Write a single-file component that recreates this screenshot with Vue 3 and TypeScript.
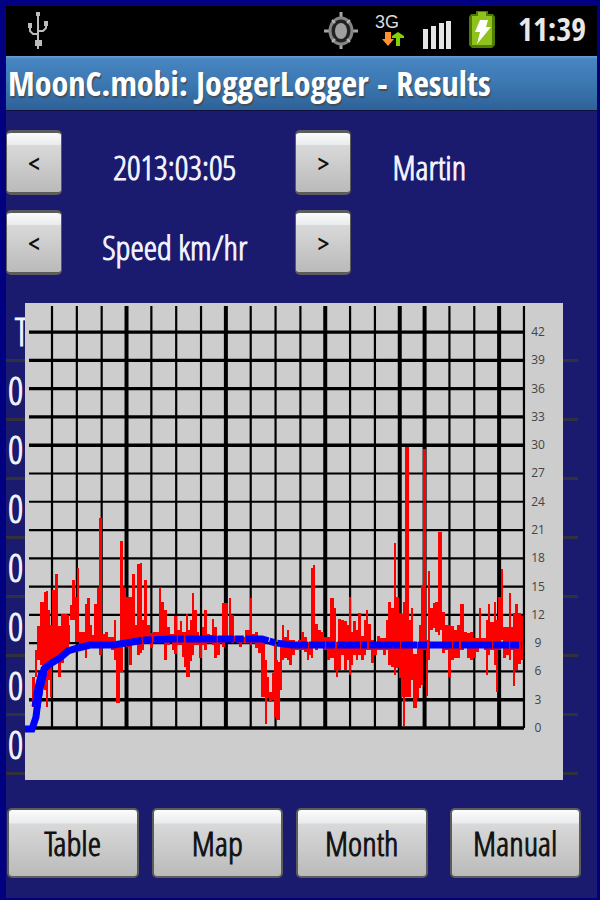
<script setup lang="ts">
import { ref } from 'vue'

type Sample = [x: number, top: number, bottom: number]

const dates = ref<string[]>(['2013:03:05'])
const metrics = ref<string[]>(['Speed km/hr'])
const dateIndex = ref(0)
const metricIndex = ref(0)
const tabs = ['Table', 'Map', 'Month', 'Manual']
const rows = ['0', '0', '0', '0', '0', '0', '0']

function step(index: number, delta: number, count: number): number {
  return (index + delta + count) % count
}

const thickColumns = [3, 7, 11, 14, 15, 18]
const columns = Array.from({ length: 20 }, (_, i) => ({
  x: 52 + i * 24.84,
  width: thickColumns.includes(i) ? 4 : 2.2,
}))
const scale = Array.from({ length: 15 }, (_, i) => ({
  value: i * 3,
  y: 728 - i * 28.28,
  width: i < 2 || i > 9 ? 3.4 : 2.2,
}))

const samples: Sample[] = [
  [33, 677, 707], [36, 650, 677], [38, 626, 660], [41, 602, 665], [43, 602, 680], [45, 592, 690],
  [47, 591, 707], [49, 610, 680], [51, 625, 697], [53, 590, 665], [56, 574, 660], [59, 626, 677],
  [62, 614, 663], [65, 614, 657], [68, 615, 650], [70, 625, 642], [71, 605, 620], [73, 580, 620],
  [76, 597, 642], [78, 568, 642], [80, 632, 650], [83, 632, 645], [86, 604, 658], [88, 598, 645],
  [91, 625, 645], [93, 635, 645], [95, 604, 645], [98, 588, 645], [100, 518, 655], [103, 634, 645],
  [106, 632, 648], [109, 637, 648], [112, 637, 650], [115, 620, 660], [117, 641, 703], [119, 641, 703],
  [121, 541, 672], [124, 588, 645], [127, 597, 647], [130, 597, 665], [133, 574, 645], [136, 625, 645],
  [138, 564, 655], [141, 563, 653], [143, 620, 650], [145, 580, 640], [148, 625, 642], [151, 633, 648],
  [154, 632, 642], [157, 632, 640], [160, 587, 640], [162, 602, 640], [165, 610, 660], [168, 627, 645],
  [171, 634, 640], [173, 634, 650], [175, 616, 654], [178, 630, 645], [181, 621, 645], [183, 632, 657],
  [185, 632, 667], [187, 614, 677], [189, 630, 677], [191, 620, 661], [193, 593, 655], [195, 610, 645],
  [198, 632, 645], [200, 636, 658], [203, 627, 645], [205, 610, 650], [208, 634, 643], [211, 635, 643],
  [213, 619, 645], [215, 627, 658], [218, 636, 655], [221, 636, 643], [223, 603, 647], [226, 603, 640],
  [230, 598, 640], [232, 615, 643], [235, 636, 642], [238, 636, 643], [240, 637, 647], [243, 637, 643],
  [246, 630, 643], [249, 630, 643], [251, 598, 645], [253, 634, 643], [256, 632, 648], [259, 637, 653],
  [262, 640, 697], [264, 642, 697], [266, 660, 724], [268, 677, 698], [270, 692, 702], [273, 673, 700],
  [275, 640, 718], [277, 660, 720], [279, 662, 720], [281, 645, 690], [283, 625, 660], [285, 637, 658],
  [288, 630, 660], [290, 640, 665], [293, 640, 655], [296, 642, 650], [299, 640, 650], [302, 632, 650],
  [305, 637, 652], [308, 642, 660], [310, 642, 655], [312, 568, 658], [314, 565, 645], [316, 624, 650],
  [319, 630, 645], [322, 632, 648], [325, 637, 650], [328, 637, 660], [331, 598, 658], [333, 598, 658],
  [335, 608, 670], [337, 642, 677], [339, 619, 670], [342, 620, 655], [345, 621, 670], [348, 625, 660],
  [350, 597, 675], [352, 632, 665], [354, 621, 655], [357, 630, 660], [359, 613, 655], [362, 636, 660],
  [365, 620, 655], [367, 610, 650], [369, 624, 650], [372, 640, 663], [375, 642, 655], [378, 636, 650],
  [381, 638, 650], [384, 638, 655], [387, 620, 650], [389, 602, 665], [392, 608, 667], [395, 543, 675],
  [397, 597, 668], [400, 613, 678], [402, 614, 697], [404, 602, 726], [406, 447, 697], [408, 447, 697],
  [410, 620, 697], [412, 608, 680], [414, 654, 708], [416, 654, 708], [418, 642, 698], [420, 625, 688],
  [422, 585, 685], [424, 449, 650], [425, 449, 650], [427, 640, 696], [429, 571, 660], [431, 608, 630],
  [434, 603, 628], [436, 602, 632], [439, 532, 635], [441, 532, 630], [443, 612, 653], [446, 625, 650],
  [449, 625, 677], [452, 626, 660], [455, 630, 658], [458, 625, 658], [461, 604, 650], [463, 604, 650],
  [465, 632, 648], [468, 633, 658], [471, 632, 660], [474, 638, 658], [477, 638, 652], [480, 608, 648],
  [482, 638, 645], [485, 638, 650], [487, 620, 675], [489, 604, 655], [491, 622, 650], [493, 622, 650],
  [495, 602, 665], [497, 620, 692], [499, 597, 650], [502, 569, 640], [504, 627, 658], [507, 627, 655],
  [510, 593, 660], [512, 627, 650], [514, 613, 686], [516, 604, 670], [519, 613, 664], [522, 616, 660],
]

const speedPath = samples
  .map(([x, top, bottom], i) => {
    const next = samples[i + 1]
    const width = Math.min(next ? next[0] - x : 2, 3)
    return `M${x - 1} ${top}h${width}V${bottom}h${-width}Z`
  })
  .join('')
</script>

<template>
  <div class="device">
    <header class="status">
      <svg class="usb" width="22" height="50" viewBox="0 0 22 50" aria-label="USB connected">
        <path d="M11 7v36M3 19v6l3 3h5M19 17v5l-3 3h-5" fill="none" stroke="#bcbcbc" stroke-width="2" />
        <path d="M9 6h4v4H9zM1 17h4v5H1zM17 15h4v5h-4zM8 34h7v6H8z" fill="#bcbcbc" />
      </svg>
      <div class="indicators">
        <svg width="34" height="50" viewBox="0 0 34 50" aria-label="GPS">
          <path d="M17 6v6M17 37v6M0 25h6M28 25h6" stroke="#a5a5a5" stroke-width="3" />
          <ellipse cx="17" cy="25" rx="11" ry="13" fill="#222" stroke="#858585" stroke-width="3" />
          <ellipse cx="17" cy="25" rx="6" ry="8" fill="#a0a0a0" />
          <path d="M8 14l3 3M26 14l-3 3M8 36l3-3M26 36l-3-3" stroke="#b8b8b8" stroke-width="2" />
        </svg>
        <svg class="net" width="32" height="50" viewBox="0 0 32 50" aria-label="3G data">
          <text x="1" y="22" font-size="18" fill="#ddd">3G</text>
          <path d="M11 26h6v7h3l-6 7-6-7h3z" fill="#ff922e" />
          <path d="M22 40h4v-8h4v-2l-6-4-6 4v2h4z" fill="#7fd400" />
        </svg>
        <svg width="30" height="50" viewBox="0 0 30 50" aria-label="Signal">
          <path d="M1 23h5v20H1zM9 20h5v23H9zM17 17h5v26h-5zM24 15h5v28h-5z" fill="#e4e4e4" />
        </svg>
        <svg width="28" height="50" viewBox="0 0 28 50" aria-label="Battery charging">
          <path d="M8 5h12v3h5l2 3v28l-3 3H4l-3-3V11l2-3h5z" fill="#4f7d00" />
          <path d="M10 6h8v4h6v29H4V10h6z" fill="#8fc31c" />
          <path d="M12 14h8l-2 7h5L9 38l3-12H7z" fill="#fff" />
        </svg>
        <time class="clock">11:39</time>
      </div>
    </header>

    <h1 class="title">MoonC.mobi: JoggerLogger - Results</h1>

    <main class="screen">
      <section class="pickers">
        <button class="key" aria-label="Previous date" @click="dateIndex = step(dateIndex, -1, dates.length)">&lt;</button>
        <span class="picked">{{ dates[dateIndex] }}</span>
        <button class="key" aria-label="Next date" @click="dateIndex = step(dateIndex, 1, dates.length)">&gt;</button>
        <span class="runner">Martin</span>
        <button class="key" aria-label="Previous measure" @click="metricIndex = step(metricIndex, -1, metrics.length)">&lt;</button>
        <span class="picked">{{ metrics[metricIndex] }}</span>
        <button class="key" aria-label="Next measure" @click="metricIndex = step(metricIndex, 1, metrics.length)">&gt;</button>
      </section>

      <section class="results">
        <table class="log">
          <thead>
            <tr><th scope="col">T</th></tr>
          </thead>
          <tbody>
            <tr v-for="(row, i) in rows" :key="i"><td>{{ row }}</td></tr>
          </tbody>
        </table>
        <svg class="chart" viewBox="25 303 538 477" role="img" aria-label="Speed km/hr">
          <rect x="25" y="303" width="538" height="477" fill="#cdcdcd" />
          <g stroke="#000">
            <line v-for="c in columns" :key="c.x" :x1="c.x" :x2="c.x" y1="306" y2="728" :stroke-width="c.width" />
            <line v-for="s in scale" :key="s.value" x1="29" x2="524" :y1="s.y" :y2="s.y" :stroke-width="s.width" />
          </g>
          <g class="scale">
            <text v-for="s in scale" :key="s.value" x="538" :y="s.y + 4">{{ s.value }}</text>
          </g>
          <path :d="speedPath" fill="#f00" />
          <path
            d="M25 729H32L36 717L38 700L41 682L44 669L50 664L60 658L68 651L78 648L90 645H113L126 643"
            fill="none" stroke="#00f" stroke-width="7"
          />
          <path
            d="M126 643L145 640L170 639H262L276 643L292 645H522"
            fill="none" stroke="#00f" stroke-width="7" stroke-dasharray="16 1 9 2 23 1 6 2 31 1"
          />
          <path d="M36 707L39 688L43 672" fill="none" stroke="#00f" stroke-width="9" />
        </svg>
      </section>

      <nav class="tabs">
        <button v-for="tab in tabs" :key="tab" class="key tab">{{ tab }}</button>
      </nav>
    </main>
  </div>
</template>

<style>
body {
  margin: 0;
  background: #000080;
}
</style>

<style scoped>
.device {
  box-sizing: border-box;
  min-height: 100vh;
  padding: 6px 3px 2px 6px;
  display: flex;
  flex-direction: column;
  background: #000080;
  color: #f4f4ff;
  font-family: "Open Sans Condensed Light", "Open Sans", "Noto Sans", sans-serif;
  font-size: 34px;
  line-height: 36px;
}
.status {
  display: flex;
  justify-content: space-between;
  height: 50px;
  padding: 0 11px 0 21px;
  background: #000;
}
.indicators {
  display: flex;
  gap: 16px;
}
.net text {
  font-family: "Liberation Sans", sans-serif;
}
.clock,
.title {
  font-family: "Open Sans Condensed", "Open Sans", "Noto Sans", sans-serif;
}
.clock {
  padding-left: 6px;
  color: #e8e8e8;
  font-size: 32px;
  line-height: 46px;
}
.title {
  margin: 0;
  padding: 0 2px;
  border-bottom: 1px solid #101040;
  background: linear-gradient(#6ba0d4 0, #4785c2 3px, #3c78b2 50%, #2e6298);
  color: #fff;
  font-size: 34px;
  font-weight: 700;
  line-height: 54px;
  white-space: nowrap;
  text-shadow: 1px 2px 1px #444c58;
}
.screen {
  flex: 1;
  display: flex;
  flex-direction: column;
  background: #1a1a6e;
}
.pickers {
  display: grid;
  grid-template-columns: 56px 39.5% 56px 1fr;
  row-gap: 15px;
  padding: 19px 0 0;
}
.key {
  box-sizing: border-box;
  height: 65px;
  padding: 0;
  border: solid #5c5c5c;
  border-width: 3px 1px;
  border-radius: 5px;
  background: linear-gradient(#fafcfd, #e9ebec 20%, #d9d9d9 21%, #bababa);
  color: #111;
  font: inherit;
}
.pickers .key {
  font-size: 26px;
}
.key,
.picked,
.runner,
.log {
  -webkit-text-stroke: 1px currentColor;
}
.picked,
.runner {
  padding-top: 8px;
  align-self: center;
  white-space: nowrap;
}
.picked {
  padding-right: 8px;
  text-align: center;
}
.runner {
  padding-left: 41px;
}
.results {
  display: grid;
  margin-top: 28px;
}
.log,
.chart {
  grid-area: 1 / 1;
}
.log {
  width: calc(100% - 19px);
  align-self: start;
  border-collapse: collapse;
  font-size: 38px;
  line-height: 40px;
}
.log th,
.log td {
  height: 56px;
  padding: 0 2px;
  border-bottom: 3px solid #30303f;
  text-align: left;
}
.log th {
  padding-left: 9px;
  font-weight: 400;
}
.chart {
  position: relative;
  box-sizing: border-box;
  display: block;
  width: 100%;
  padding: 0 34px 0 19px;
}
.scale text {
  fill: #444;
  font-family: "Open Sans", sans-serif;
  font-size: 12px;
  text-anchor: middle;
}
.tabs {
  display: flex;
  gap: 13px;
  padding: 28px 16px 20px 1px;
}
.tab {
  flex: 1;
  height: 70px;
  border-width: 2px;
}
.tab:last-child {
  margin-left: 9px;
}
</style>
